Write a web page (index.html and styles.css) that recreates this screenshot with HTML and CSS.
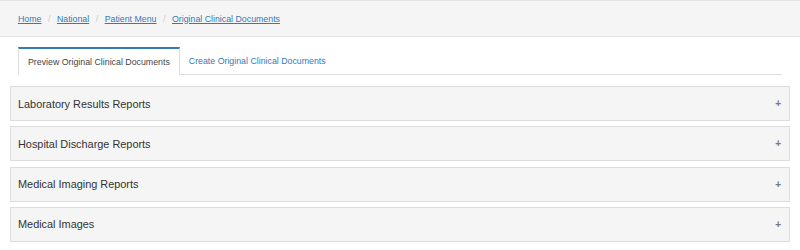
FILE: index.html
```html
<!DOCTYPE html>
<html lang="en">
<head>
    <meta charset="UTF-8">
    <title>Original Clinical Documents</title>
    <link rel="stylesheet" href="styles.css">
</head>
<body>
    <header class="crumb-bar">
        <ol class="breadcrumb">
            <li><a href="#">Home</a></li>
            <li><a href="#">National</a></li>
            <li><a href="#">Patient Menu</a></li>
            <li><a href="#">Original Clinical Documents</a></li>
        </ol>
    </header>

    <main class="content">
        <ul class="tabs">
            <li class="tab active">Preview Original Clinical Documents</li>
            <li class="tab"><a href="#">Create Original Clinical Documents</a></li>
        </ul>

        <div class="panels">
            <div class="panel"><span>Laboratory Results Reports</span><span class="toggle">+</span></div>
            <div class="panel"><span>Hospital Discharge Reports</span><span class="toggle">+</span></div>
            <div class="panel"><span>Medical Imaging Reports</span><span class="toggle">+</span></div>
            <div class="panel"><span>Medical Images</span><span class="toggle">+</span></div>
        </div>
    </main>
</body>
</html>
```

FILE: styles.css
```css
/* Basic Reset */
* {
    margin: 0;
    padding: 0;
    box-sizing: border-box;
}

body {
    font-family: "Liberation Sans", Arial, sans-serif;
    color: #333;
    background: #fff;
}

a {
    color: #337ab7;
}

.crumb-bar {
    background: #f5f5f5;
    border-top: 1px solid #e3e3e3;
    border-bottom: 1px solid #e3e3e3;
    height: 37px;
    display: flex;
    align-items: center;
    padding: 0 18px;
}

.breadcrumb {
    list-style: none;
    display: flex;
    font-size: 8.8px;
}

.breadcrumb li + li::before {
    content: "/";
    color: #ccc;
    padding: 0 6.5px;
}

.content {
    padding: 10px 10px;
}

.tabs {
    list-style: none;
    display: flex;
    margin: 0 8px 11px;
    border-bottom: 1px solid #ddd;
    font-size: 8.8px;
}

.tab {
    height: 28px;
    display: flex;
    align-items: center;
    padding: 0 9px;
    margin-bottom: -1px;
}

.tab a {
    text-decoration: none;
}

.tab.active {
    border: 1px solid #ddd;
    border-top: 2px solid #337ab7;
    border-bottom-color: #fff;
    background: #fff;
    color: #444;
}

.panels {
    display: flex;
    flex-direction: column;
    gap: 5.3px;
}

.panel {
    height: 35px;
    background: #f5f5f5;
    border: 1px solid #ddd;
    display: flex;
    align-items: center;
    justify-content: space-between;
    padding: 0 8px 0 7px;
    font-size: 10.9px;
}

.toggle {
    color: #777;
    font-size: 10px;
    font-weight: bold;
}
```
